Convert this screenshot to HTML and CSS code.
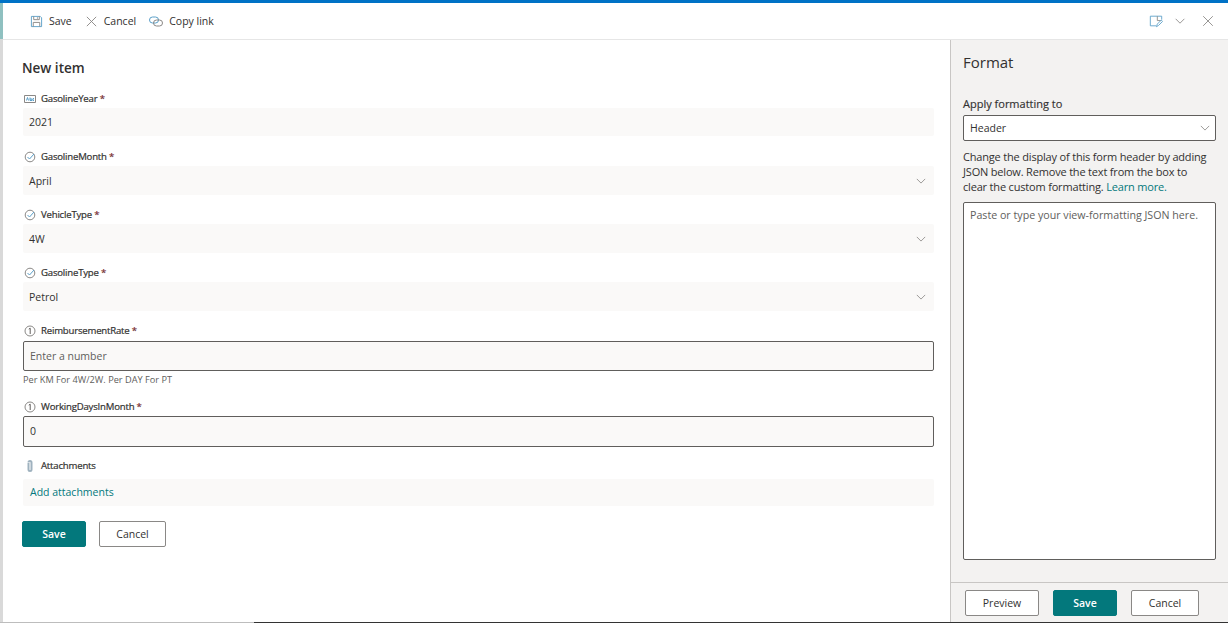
FILE: index.html
```html
<!DOCTYPE html>
<html lang="en">
<head>
<meta charset="utf-8">
<title>New item</title>
<link rel="stylesheet" href="styles.css">
</head>
<body>
<div class="topline"></div>
<div class="shell">
  <div class="stripe"><div class="stripe-top"></div></div>
  <div class="panel">
    <header class="commandbar">
      <div class="cmd-group">
        <button class="cmd"><svg class="ico" viewBox="0 0 14 14"><path class="s-blue" d="M1.500 1.500h9.500l1.500 1.500v9.500h-11z"/><path class="s-gray" d="M4 1.500v3.500h6v-3.500M3.500 12.500v-4.500h7v4.500M8 2.500v1.500"/></svg>Save</button>
        <button class="cmd"><svg class="ico" viewBox="0 0 14 14"><path class="s-gray" d="M2 2l10 10M12 2l-10 10"/></svg>Cancel</button>
        <button class="cmd"><svg class="ico ico-wide" viewBox="0 0 14 12"><rect class="s-blue" x=".5" y="1.500" width="9" height="6" rx="3"/><rect class="s-gray" x="4.500" y="4.500" width="9" height="6" rx="3"/></svg>Copy link</button>
      </div>
      <div class="cmd-group cmd-right">
        <svg class="ico-r" viewBox="0 0 16 16"><path class="s-blue" d="M8 13.500h-6.500v-11h13v4"/><path class="s-gray" d="M9.500 2.500v5h4"/><path class="s-blue" d="M8.500 14.500l1-3 4.500-4.500 1.500 1.500-4.500 4.500z"/></svg>
        <svg class="ico-r" viewBox="0 0 16 16"><path class="s-gray" d="M3 5.500l5 5 5-5"/></svg>
        <svg class="ico-r ico-close" viewBox="0 0 16 16"><path class="s-gray" d="M2.500 2.500l11 11M13.500 2.500l-11 11"/></svg>
      </div>
    </header>
    <div class="content">
      <main class="form">
        <h1 class="title">New item</h1>

        <div class="field field-first">
          <div class="label"><svg class="lico" viewBox="0 0 12 12"><path class="s-gray" d="M.5 2.500h11v7h-11z"/><path class="s-blue" d="M2.500 7.500l1-3 1 3M6 4.500v3h2v-1.500h-2M10 5.500h-1v2h1"/></svg><span>GasolineYear<span class="req"> *</span></span></div>
          <div class="box">2021</div>
        </div>

        <div class="field">
          <div class="label"><svg class="lico" viewBox="0 0 12 12"><circle class="s-gray" cx="6" cy="6" r="4.800"/><path class="s-blue" d="M3.500 6l2 2 4.500-5"/></svg><span>GasolineMonth<span class="req"> *</span></span></div>
          <div class="box box-select">April<svg class="chev" viewBox="0 0 12 7"><path class="s-gray" d="M1 1l5 5 5-5"/></svg></div>
        </div>

        <div class="field">
          <div class="label"><svg class="lico" viewBox="0 0 12 12"><circle class="s-gray" cx="6" cy="6" r="4.800"/><path class="s-blue" d="M3.500 6l2 2 4.500-5"/></svg><span>VehicleType<span class="req"> *</span></span></div>
          <div class="box box-select">4W<svg class="chev" viewBox="0 0 12 7"><path class="s-gray" d="M1 1l5 5 5-5"/></svg></div>
        </div>

        <div class="field">
          <div class="label"><svg class="lico" viewBox="0 0 12 12"><circle class="s-gray" cx="6" cy="6" r="4.800"/><path class="s-blue" d="M3.500 6l2 2 4.500-5"/></svg><span>GasolineType<span class="req"> *</span></span></div>
          <div class="box box-select">Petrol<svg class="chev" viewBox="0 0 12 7"><path class="s-gray" d="M1 1l5 5 5-5"/></svg></div>
        </div>

        <div class="field field-help">
          <div class="label label-loose"><svg class="lico" viewBox="0 0 12 12"><circle class="s-gray" cx="6" cy="6" r="5"/><path class="s-dark" d="M4.800 4.200l1.400-1v5.800"/></svg><span>ReimbursementRate<span class="req"> *</span></span></div>
          <div class="box box-input placeholder">Enter a number</div>
          <div class="help">Per KM For 4W/2W. Per DAY For PT</div>
        </div>

        <div class="field field-tight">
          <div class="label"><svg class="lico" viewBox="0 0 12 12"><circle class="s-gray" cx="6" cy="6" r="5"/><path class="s-dark" d="M4.800 4.200l1.400-1v5.800"/></svg><span>WorkingDaysInMonth<span class="req"> *</span></span></div>
          <div class="box box-input box-tall">0</div>
        </div>

        <div class="field field-attach">
          <div class="label label-attach"><svg class="lico" viewBox="0 0 12 12"><path class="s-thick" d="M4.500 3v6.500a1.500 1.500 0 0 0 3 0v-7a1.500 1.500 0 0 0-3 0"/></svg><span>Attachments</span></div>
          <div class="box box-attach"><a class="link">Add attachments</a></div>
        </div>

        <div class="actions">
          <button class="btn btn-primary">Save</button>
          <button class="btn">Cancel</button>
        </div>
      </main>
      <aside class="format">
        <div class="format-body">
          <h2 class="format-title">Format</h2>
          <div class="format-label">Apply formatting to</div>
          <div class="dropdown">Header<svg class="chev" viewBox="0 0 12 7"><path class="s-gray" d="M1 1l5 5 5-5"/></svg></div>
          <p class="desc">Change the display of this form header by adding JSON below. Remove the text from the box to clear the custom formatting. <a class="link">Learn more.</a></p>
          <div class="json">Paste or type your view-formatting JSON here.</div>
        </div>
        <div class="format-foot">
          <button class="btn btn-preview">Preview</button>
          <button class="btn btn-primary">Save</button>
          <button class="btn btn-cancel">Cancel</button>
        </div>
      </aside>
    </div>
  </div>
</div>
<div class="bottomline"><div class="bottom-light"></div><div class="bottom-dark"></div></div>
</body>
</html>
```
FILE: styles.css
```css
* { box-sizing: border-box; }
html, body { margin: 0; height: 623px; overflow: hidden; }
body {
  display: flex;
  flex-direction: column;
  background: #fff;
  color: #323130;
  font-family: "Open Sans", "Noto Sans", "Liberation Sans", sans-serif;
  font-size: 10.5px;
}
button { font-family: inherit; }
.topline { height: 3px; background: #0072c6; flex: none; }
.shell { flex: 1; display: flex; min-height: 0; }
.stripe { width: 3px; background: #d9d9d9; flex: none; }
.stripe-top { height: 36px; background: #8fc0c0; }
.panel { flex: 1; display: flex; flex-direction: column; min-width: 0; background: #fff; }

.commandbar {
  height: 37px;
  flex: none;
  border-bottom: 1px solid #e6e6e6;
  display: flex;
  justify-content: space-between;
  align-items: center;
  padding: 0 13px 0 27px;
}
.cmd-group { display: flex; align-items: center; gap: 13px; }
.cmd-right { gap: 10px; }
.cmd {
  display: flex; align-items: center; gap: 6px;
  border: 0; background: none; padding: 0; margin: 0;
  font-size: 10.5px; color: #323130;
}
.ico { width: 13px; height: 13px; }
.ico-wide { width: 14px; }
.ico-r { width: 14px; height: 14px; }
.ico-close { margin-left: 4px; }
svg { fill: none; flex: none; }
.s-blue { stroke: #5a9fc8; stroke-width: 1; }
.s-gray { stroke: #8a8886; stroke-width: 1; }
.s-dark { stroke: #605e5c; stroke-width: 1; }
.s-thick { stroke-width: 2; stroke: #9fb2bf; }

.content { flex: 1; display: flex; min-height: 0; }
.form { flex: 1; min-width: 0; padding: 19px 16px 0 19px; }
.title { margin: 0 0 15px; font-size: 13.5px; line-height: 18px; font-weight: 600; color: #323130; }

.field { margin-bottom: 13px; }
.field-first { margin-bottom: 14px; }
.field-help { margin-bottom: 14px; }
.label {
  display: flex; align-items: center; gap: 5px;
  height: 14px; margin: 0 0 2px 2px;
  font-size: 9.6px; line-height: 14px; font-weight: 400; color: #323130;
  letter-spacing: -.2px;
  -webkit-text-stroke: .2px #323130;
  white-space: pre;
}
.label-loose { margin-bottom: 3px; }
.lico { width: 12px; height: 12px; }
.req { color: #a4262c; }
.box {
  height: 28px; margin-left: 1px;
  display: flex; align-items: center; justify-content: space-between;
  padding: 0 6px 1px;
  background: #faf9f8;
  border-radius: 2px;
  font-size: 10.5px;
  color: #323130;
}
.box-select { height: 29px; padding-bottom: 0; }
.chev { width: 10px; height: 6px; margin-right: 2px; }
.box-input { height: 30px; border: 1px solid #605e5c; }
.box-tall { height: 31px; }
.placeholder { color: #605e5c; }
.help { font-size: 9.2px; line-height: 12px; margin: 3px 0 0 1px; color: #605e5c; }
.field-tight { margin-bottom: 12px; }
.field-attach { margin-bottom: 15px; }
.label-attach { margin-bottom: 6px; }
.box-attach { height: 27px; padding-left: 7px; }
.link { color: #03787c; }
.actions { display: flex; gap: 13px; }
.btn {
  height: 26px; width: 67px;
  padding: 0; margin: 0;
  background: #fff;
  border: 1px solid #8a8886;
  border-radius: 2px;
  font-size: 10.5px;
  color: #323130;
}
.btn-primary {
  width: 64px;
  background: #03787c;
  border-color: #03787c;
  color: #fff;
  font-weight: 600;
}

.format {
  width: 278px; flex: none;
  display: flex; flex-direction: column;
  background: #f3f2f1;
  border-left: 1px solid #c8c6c4;
}
.format-body { flex: 1; padding: 11px 12px 0 12px; min-height: 0; }
.format-title { margin: 0 0 23px; font-size: 15px; line-height: 22px; font-weight: 400; }
.format-label { font-size: 11px; line-height: 15px; margin-bottom: 4px; -webkit-text-stroke: .15px #323130; }
.dropdown {
  height: 26px;
  display: flex; align-items: center; justify-content: space-between;
  padding: 0 3px 1px 6px;
  background: #fff;
  border: 1px solid #605e5c;
  border-radius: 2px;
}
.desc { margin: 8px 0 8px; font-size: 11px; line-height: 15px; width: 250px; letter-spacing: -.18px; }
.json {
  height: 358px;
  padding: 5px 6px;
  background: #fff;
  border: 1px solid #605e5c;
  border-radius: 2px;
  color: #605e5c;
  font-size: 10.67px;
}
.format-foot {
  height: 40px; flex: none;
  border-top: 1px solid #c8c6c4;
  display: flex; gap: 14px;
  padding: 7px 0 0 14px;
}
.btn-preview { width: 74px; }
.btn-cancel { width: 68px; }

.bottomline { height: 1px; flex: none; display: flex; }
.bottom-light { width: 254px; background: #bdbdbd; }
.bottom-dark { flex: 1; background: #333; }
```
